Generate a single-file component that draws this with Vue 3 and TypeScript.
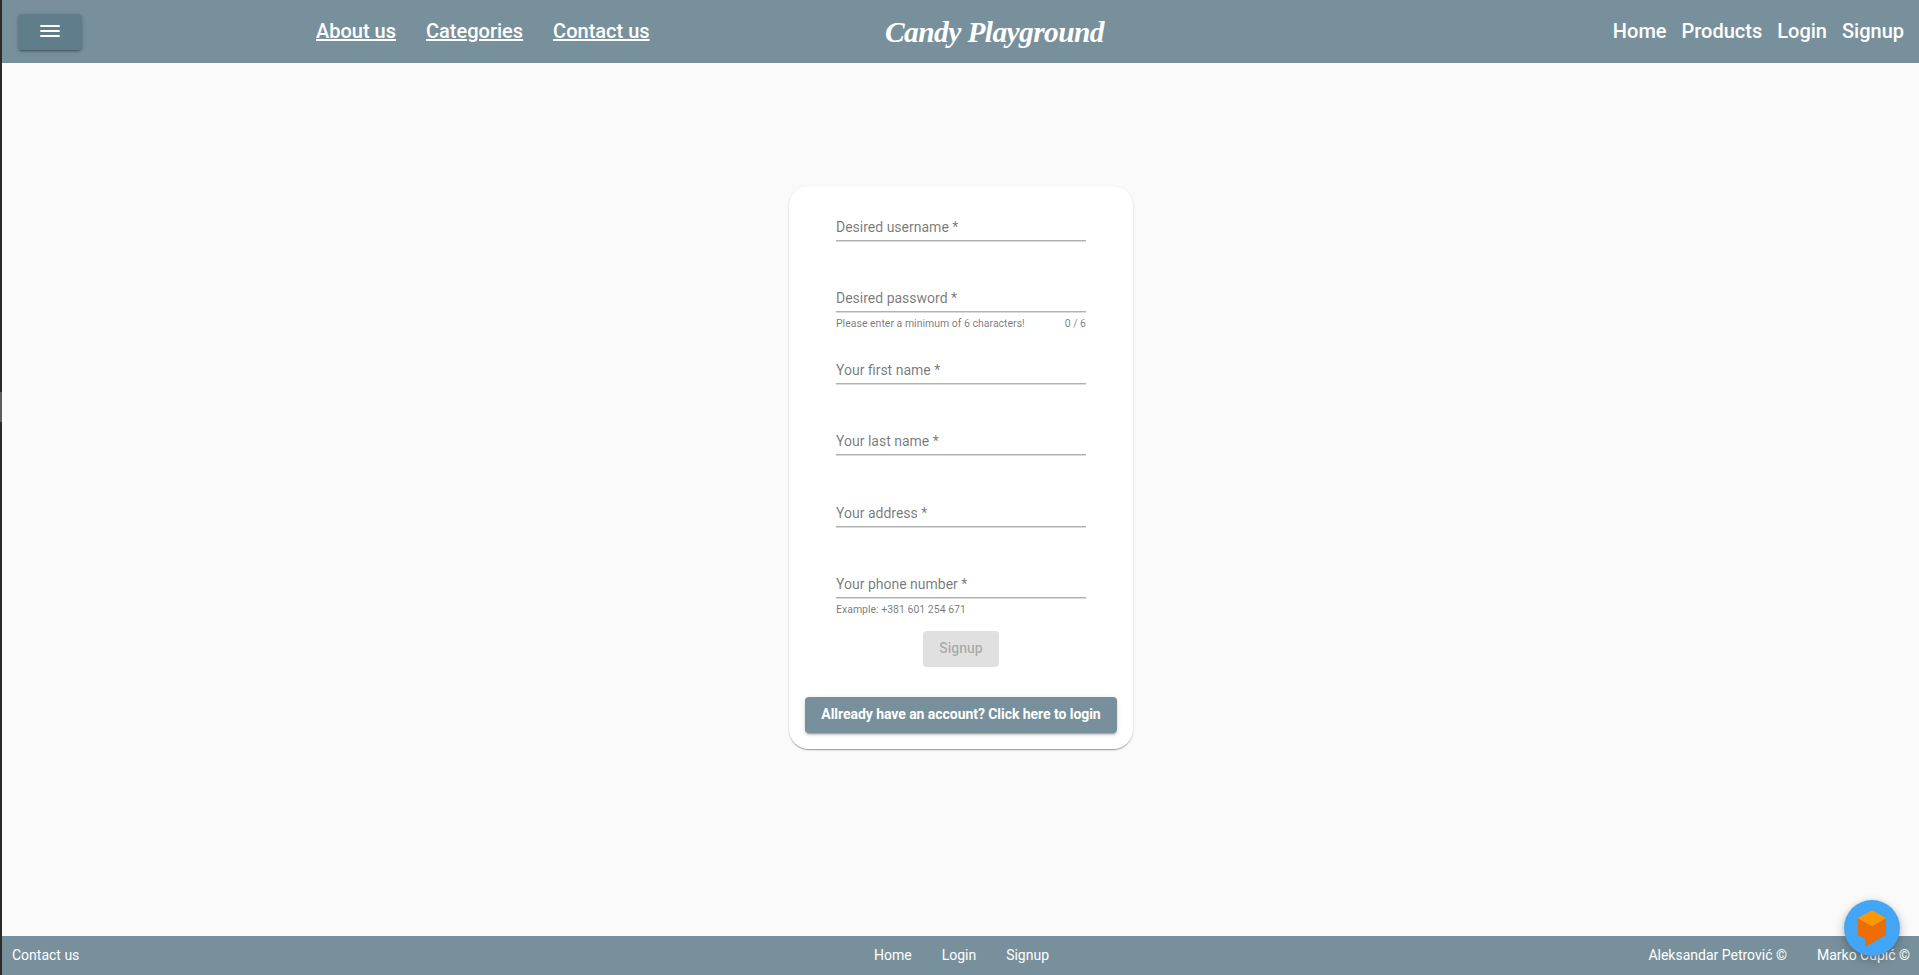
<script setup lang="ts">
interface Field {
  label: string
  hint?: string
  counter?: string
}

const mainLinks: string[] = ['About us', 'Categories', 'Contact us']
const userLinks: string[] = ['Home', 'Products', 'Login', 'Signup']
const footerLinks: string[] = ['Home', 'Login', 'Signup']
const authors: string[] = ['Aleksandar Petrović ©', 'Marko Čupić ©']

const fields: Field[] = [
  { label: 'Desired username *' },
  { label: 'Desired password *', hint: 'Please enter a minimum of 6 characters!', counter: '0 / 6' },
  { label: 'Your first name *' },
  { label: 'Your last name *' },
  { label: 'Your address *' },
  { label: 'Your phone number *', hint: 'Example: +381 601 254 671' },
]
</script>

<template>
  <div class="frame">
    <div class="edge"><span class="edge-thumb"></span></div>
    <div class="page">
      <header class="toolbar">
        <div class="left">
          <button class="menu" aria-label="Menu">
            <svg width="24" height="24" viewBox="0 0 24 24" fill="#fff">
              <path d="M2.3 6h19.4v2H2.3zM2.3 11h19.4v2H2.3zM2.3 16h19.4v2H2.3z" />
            </svg>
          </button>
          <nav class="main-nav">
            <a v-for="l in mainLinks" :key="l">{{ l }}</a>
          </nav>
        </div>
        <div class="brand"><span class="brand-text">Candy Playground</span></div>
        <nav class="user-nav">
          <a v-for="l in userLinks" :key="l">{{ l }}</a>
        </nav>
      </header>

      <main class="content">
        <form class="card">
          <div class="fields">
            <div v-for="f in fields" :key="f.label" class="field">
              <label class="label">{{ f.label }}</label>
              <div class="line"></div>
              <div v-if="f.hint" class="hint">
                <span>{{ f.hint }}</span><span>{{ f.counter }}</span>
              </div>
            </div>
          </div>
          <button class="signup" type="button" disabled>Signup</button>
          <button class="to-login" type="button">Allready have an account? Click here to login</button>
        </form>
      </main>

      <footer class="footer">
        <div class="foot-left">Contact us</div>
        <nav class="foot-nav">
          <a v-for="l in footerLinks" :key="l">{{ l }}</a>
        </nav>
        <div class="authors">
          <span v-for="a in authors" :key="a">{{ a }}</span>
        </div>
      </footer>
    </div>

    <div class="chat">
      <svg width="56" height="56" viewBox="0 0 56 56">
        <path d="M13.7 18.3v16.4l7.6 4.5v7.5L42 34.7V18.3L28 26.2z" fill="#ef6c00" />
        <path d="M28 10.2l14 8.1-14 7.9-14.3-7.9z" fill="#ff9800" />
      </svg>
    </div>
  </div>
</template>

<style>
body {
  margin: 0;
  background: #fafafa;
  overflow: hidden;
}
</style>

<style scoped>
.frame {
  position: relative;
  display: flex;
  height: 975px;
  font-family: Roboto, "Liberation Sans", sans-serif;
}
.edge {
  width: 2px;
  background: #2a2a2b;
  padding-top: 392px;
  box-sizing: border-box;
}
.edge-thumb {
  display: block;
  height: 30px;
  background: #5c5c5c;
}
.page {
  flex: 1;
  display: flex;
  flex-direction: column;
}
button {
  font-family: inherit;
  border: 0;
  border-radius: 4px;
  height: 36px;
  padding: 0 16px 2px;
  font-size: 14px;
  font-weight: 500;
  line-height: 34px;
  white-space: nowrap;
}
.toolbar {
  height: 63px;
  display: grid;
  grid-template-columns: 883px 219px 1fr;
  align-items: center;
  background: #78909c;
  color: #fff;
  font-size: 20px;
  font-weight: 500;
}
.left {
  display: flex;
  align-items: center;
}
.menu {
  margin: 1px 0 0 16px;
  width: 64px;
  display: flex;
  align-items: center;
  justify-content: center;
  background: #607d8b;
  box-shadow: 0 3px 1px -2px rgba(0, 0, 0, .2), 0 2px 2px rgba(0, 0, 0, .14), 0 1px 5px rgba(0, 0, 0, .12);
}
.main-nav {
  display: flex;
  gap: 30px;
  margin-left: 234px;
  padding-bottom: 2px;
}
.main-nav a {
  text-decoration: underline;
}
.brand {
  display: flex;
  justify-content: center;
}
.brand-text {
  font-family: "Brush Script MT", "Liberation Serif", cursive;
  font-style: italic;
  font-weight: 700;
  font-size: 29.5px;
  line-height: 40px;
  letter-spacing: -.6px;
  white-space: nowrap;
}
.user-nav {
  display: flex;
  justify-content: flex-end;
  gap: 15px;
  padding: 0 15px 2px 0;
}
.content {
  flex: 1;
  display: flex;
  justify-content: center;
  align-items: flex-start;
  padding: 123px 0 0 1px;
}
.card {
  box-sizing: border-box;
  width: 344px;
  height: 563px;
  padding: 16px;
  border-radius: 20px;
  background: #fff;
  box-shadow: 0 2px 1px -1px rgba(0, 0, 0, .2), 0 1px 1px rgba(0, 0, 0, .14), 0 1px 3px rgba(0, 0, 0, .12);
  display: flex;
  flex-direction: column;
  align-items: center;
}
.fields {
  width: 250px;
  padding-top: 16px;
  color: rgba(0, 0, 0, .54);
}
.field {
  height: 71.4px;
}
.label {
  display: block;
  height: 22px;
  font-size: 14px;
  line-height: 18px;
}
.line {
  height: 1px;
  background: #b0b0b0;
  box-shadow: 0 1px 0 #dadada;
}
.hint {
  display: flex;
  justify-content: space-between;
  margin-top: 4px;
  font-size: 10.5px;
  line-height: 16px;
}
.signup {
  flex-shrink: 0;
  margin-top: -15.4px;
  color: rgba(0, 0, 0, .26);
  background: #e0e0e0;
}
.to-login {
  flex-shrink: 0;
  width: 312px;
  margin-top: 30px;
  padding: 0 0 2px;
  font-weight: 700;
  letter-spacing: -.05px;
  color: #fff;
  background: #78909c;
  box-shadow: 0 3px 1px -2px rgba(0, 0, 0, .2), 0 2px 2px rgba(0, 0, 0, .14), 0 1px 5px rgba(0, 0, 0, .12);
}
.footer {
  box-sizing: border-box;
  height: 39px;
  padding-bottom: 2px;
  display: grid;
  grid-template-columns: 1fr auto 1fr;
  align-items: center;
  background: #78909c;
  color: #fff;
  font-size: 14px;
}
.foot-left {
  padding-left: 10px;
}
.foot-nav {
  display: flex;
  gap: 30px;
  padding-left: 2px;
}
.authors {
  display: flex;
  justify-content: flex-end;
  gap: 30px;
  padding-right: 9px;
}
/* Floating chat launcher, overlaps the footer */
.chat {
  position: absolute;
  right: 19px;
  bottom: 19px;
  width: 56px;
  height: 56px;
  border-radius: 50%;
  background: #42a5f5;
  box-shadow: rgba(0, 0, 0, .22) 0 4px 12px, rgba(0, 0, 0, .12) 0 1px 5px;
}
.chat svg {
  display: block;
}
</style>
